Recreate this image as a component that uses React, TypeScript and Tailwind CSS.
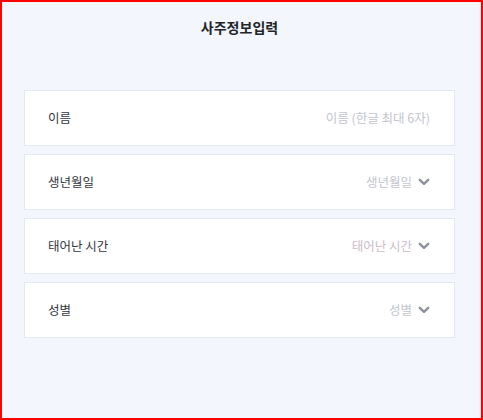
import React from "react";

function Chevron() {
  return (
    <svg width="12" height="8" viewBox="0 0 12 8" className="ml-[6px]">
      <path d="M1.8 1.8 L6 5.8 L10.2 1.8" fill="none" stroke="#8b9099" strokeWidth="2.3" strokeLinecap="round" strokeLinejoin="round" />
    </svg>
  );
}

function Row({ label, placeholder, select, tint }: { label: string; placeholder: string; select?: boolean; tint?: boolean }) {
  return (
    <div className="flex h-[56px] items-center justify-between border border-[#e4e8f1] bg-white pl-[23px] pr-[24px]">
      <span className="text-[12.5px] text-[#333740]">{label}</span>
      <span className="flex items-center">
        <span className={"text-[12.5px] " + (tint ? "text-[#cdbccb]" : "text-[#c2c6cf]")}>{placeholder}</span>
        {select ? <Chevron /> : null}
      </span>
    </div>
  );
}

export default function App() {
  return (
    <div
      className="h-[420px] w-[483px] border-2 border-[#ff0000] bg-[#f3f6fd]"
      style={{ fontFamily: '"Noto Sans CJK KR", "Noto Sans", sans-serif' }}
    >
      <div className="ml-[22px] w-[431px]">
        <div className="flex h-[51px] items-center justify-center text-[14px] font-bold text-[#222428]">사주정보입력</div>
        <div className="mt-[37px] flex flex-col gap-[8px]">
          <Row label="이름" placeholder="이름 (한글 최대 6자)" />
          <Row label="생년월일" placeholder="생년월일" select />
          <Row label="태어난 시간" placeholder="태어난 시간" select tint />
          <Row label="성별" placeholder="성별" select />
        </div>
      </div>
    </div>
  );
}
